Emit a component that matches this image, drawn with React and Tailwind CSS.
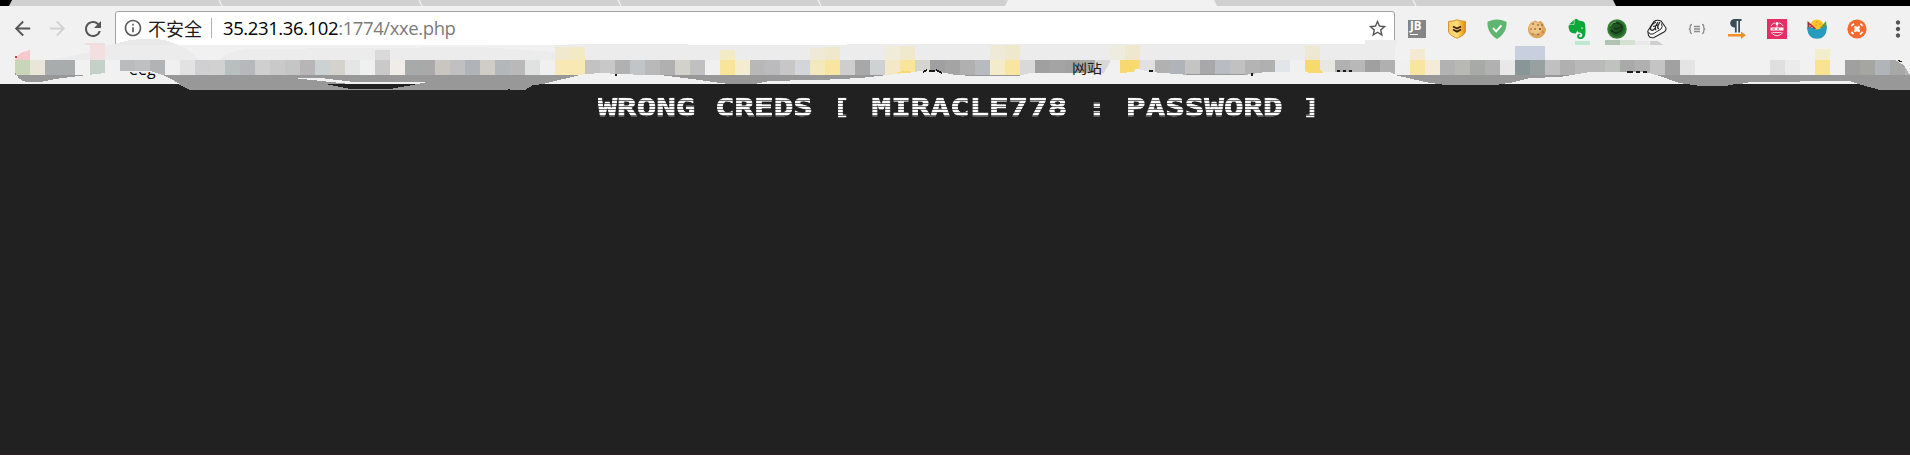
import React from "react";
import { MdArrowBack, MdArrowForward, MdRefresh, MdInfoOutline, MdStarBorder, MdMoreVert } from "react-icons/md";
import { SiEvernote } from "react-icons/si";

// Colours of the 15px cells in the bookmark strip, left to right.
const CELLS = (
  "f1f1f1 c9d5b9 e9e5d9 a9acac a9acac f1f1f1 c3d1c8 f1f1f1 b9bbbd c0c0c0 b1b3b5 f0f0f0 e2e2e2 d0d0d3 d1d1d1 b8bfbf " +
  "b7b8bb cfcfcf c9c9c9 c5c5c5 b8b5b6 ccd1d4 d5d1cd e4e6e6 f0f0f0 c9c9c9 f0ece8 a7aaa8 a9a9a9 c9c6c2 c0c0c0 b0b4b8 " +
  "d0cdc6 b3b7b9 b9b9b9 e0e2e2 f0f0f0 f7e8b4 f7e8b4 c2c2c2 c8c8c8 b1b1b1 c1c5c8 b9b9b9 b0b0b0 d2d1ca c0c0c0 f0f0f0 " +
  "f8e49a f3ecd1 b8b8b8 bbbbbd c7c7c7 d4d5da f4e9bd f8e5a0 cecece a8a8a8 cfd2d3 f3e8c7 f8e49a d5d5d0 a0a0a0 a4a4a4 " +
  "b0b0b0 b7bbc0 f3ebc9 f8e5a0 d9d9d9 a0a0a0 a4a4a4 a1a1a1 a9a9a9 d8d8d8 f0f0f0 f6dc7d e1e1e1 b1b1b1 b0b3b8 c4c4c4 " +
  "a8a8ab b9bdc3 c1c1c1 b4b4b4 b0b0b0 e2e5e9 f0f0f0 f8df8b e8e8e3 b1b1b1 b8b8b8 a0a0a0 b0b0b0 f0f0f0 f8e5a0 f4ecd8 " +
  "b2b2b2 b8b8b5 a8aaa8 b1b1b1 e8e8e8 899697 98a1a0 c0c0c0 b0b0b0 b9b9b9 b9b9b9 bfc2bf a9a9a9 b0b0b0 c4c4c4 a1a1a1 " +
  "e4e4e4 f1f1f1 f1f1f1 f1f1f1 f1f1f1 f1f1f1 dfdfdf ebebeb f1f1f1 f7e390 f1f1f1 a0a0a0 a5a5a2 b1b4b8 a7a7a7 b4b4b4"
).split(" ");

// [x, y, width, height, colour] of the paler patches above the cells.
const PATCHES = [
  [85, 43, 20, 2, "#efdcdc"], [90, 45, 15, 15, "#f3dfe0"], [375, 50, 15, 10, "#d9d9d9"],
  [555, 47, 15, 13, "#f0e9d0"], [570, 47, 15, 13, "#f3e9c5"],
  [720, 50, 15, 10, "#f3ebc4"], [810, 48, 15, 12, "#efead8"], [825, 47, 15, 13, "#f0e8ca"],
  [885, 46, 15, 14, "#f1ebda"], [900, 46, 15, 14, "#f1e9cd"],
  [990, 45, 15, 15, "#efead8"], [1005, 45, 15, 15, "#f0e8ca"], [1110, 45, 15, 15, "#eeebdf"], [1125, 45, 15, 15, "#efe8cf"],
  [1305, 46, 15, 14, "#efe8d0"], [1410, 49, 15, 11, "#f3ead0"],
  [1515, 46, 30, 14, "#c8cfdf"], [1815, 49, 15, 11, "#f4edcc"],
  [1365, 40, 32, 5, "#ececec"],
  [1575, 41, 15, 4, "#bde7cf"], [1605, 40, 15, 5, "#b0c4b1"], [1620, 40, 15, 5, "#d4e0d1"], [1635, 41, 14, 4, "#e9e9e9"],
];

function Tabs() {
  return (
    <div className="h-[6px] w-full bg-black">
      <svg className="block h-[6px] w-[1910px]" viewBox="0 0 1910 6">
        <path d="M9 6 12 0H1613L1616 6Z" fill="#d0d0d0" />
        <path d="M1005 6 1008 0H1214L1217 6Z" fill="#f1f1f1" />
        <path d="M219 0 222 6M419 0 422 6M618 0 621 6M818 0 821 6M1413 0 1416 6" stroke="#ededed" strokeWidth="1.5" />
      </svg>
    </div>
  );
}

function Shell({ children }) {
  return <div className="flex h-6 w-10 items-center justify-center">{children}</div>;
}

const ico = "block h-5 w-5";

function Extensions() {
  return (
    <div className="flex items-center">
      <Shell>
        <div className="flex h-[18px] w-[18px] flex-col bg-[#858585] pl-[2px] text-white">
          <span className="font-['Open_Sans',sans-serif] text-[11.5px] leading-[12px] font-bold">JB</span>
          <span className="mt-[2px] h-[1.5px] w-2 bg-white" />
        </div>
      </Shell>
      <Shell>
        <svg className={ico} viewBox="0 0 20 20">
          <defs><linearGradient id="gold"><stop stopColor="#f6c96a" /><stop offset=".5" stopColor="#ffe071" /><stop offset="1" stopColor="#e58a0e" /></linearGradient></defs>
          <path d="M1.5 2.5Q7 2 10 .8 13 2 18.500 2.500V12C18 16 14 17.500 10 19.300 6 17.500 2 16 1.500 12Z" fill="url(#gold)" stroke="#d48a28" strokeWidth=".9" />
          <path d="M6 7.500 10 9.500 14 7.500M6 10.500 10 12.700 14 10.500" fill="none" stroke="#3d220d" strokeWidth="1.900" />
        </svg>
      </Shell>
      <Shell>
        <svg className={ico} viewBox="0 0 20 20">
          <path d="M.5 2.800Q6 .5 10 .5T19.500 2.800C20 10 16.500 16.500 10 20 3.500 16.500 0 10 .5 2.800Z" fill="#5fb670" />
          <path d="m6 9.200 3.200 3.200 5.200-6" fill="none" stroke="#fff" strokeWidth="1.900" />
        </svg>
      </Shell>
      <Shell>
        <svg className={ico} viewBox="0 0 20 20">
          <path d="M8 1.500 11.500 3 13.500 1.700 16 4 17.500 7.500 19 10A9 9 0 1 1 4 3.500Z" fill="#dda560" />
          <ellipse cx="8.500" cy="9" rx="6.500" ry="6" fill="#efc384" />
          <g fill="#6c4021"><circle cx="6" cy="5" r=".8" /><circle cx="11" cy="6" r=".8" /><circle cx="15" cy="6" r=".7" /><circle cx="4" cy="10" r=".7" /><circle cx="8" cy="10" r=".8" /><circle cx="13" cy="10" r="1" /><circle cx="6" cy="15" r=".6" /><circle cx="11" cy="15.500" r=".7" /><circle cx="16" cy="13" r=".6" /></g>
        </svg>
      </Shell>
      <Shell><SiEvernote className="h-5 w-5 text-[#0aa839]" /></Shell>
      <Shell>
        <svg className={ico} viewBox="0 0 20 20">
          <defs><radialGradient id="orb"><stop stopColor="#1d4b20" /><stop offset=".65" stopColor="#225f26" /><stop offset="1" stopColor="#438b3c" /></radialGradient></defs>
          <circle cx="10" cy="10" r="9.800" fill="url(#orb)" />
          <path d="M6 5Q11 2 15 7 16 12 10 14 6 14 4 11M7 9Q10 11 14 8" stroke="#123a17" strokeWidth="1.500" fill="none" />
          <path d="M3 7Q5 3 9 3" stroke="#6ca55b" fill="none" />
        </svg>
      </Shell>
      <Shell>
        <svg className={ico} viewBox="0 0 20 20" fill="none" stroke="#262626">
          <path d="M7 2.500Q10 .2 14 2L18 7.500Q20.500 10.500 17 13L7 18.500Q3 19.500 1.500 16.500L.8 12Z" fill="#fafafa" strokeWidth="1.100" />
          <path d="M1.500 13Q2.500 16 6 15L14 10Q16 8 14.500 4.500" />
          <path d="M9 3Q3 6 3.500 10 4.500 13 8 9.500M6 7.500 11 6M11 3Q7 9 9 11M13 3Q9 9 12 10" strokeWidth="1.300" />
        </svg>
      </Shell>
      <Shell>
        <svg className={ico} viewBox="0 0 20 20" fill="none" stroke="#8c8c8c" strokeWidth="1.300">
          <path d="M5 5.500Q3.300 5.500 3.300 7V8.500Q3.300 10 1.800 10 3.300 10 3.300 11.500V13Q3.300 14.500 5 14.500M15 5.500Q16.700 5.500 16.700 7V8.500Q16.700 10 18.200 10 16.700 10 16.700 11.500V13Q16.700 14.500 15 14.500M7 7.500H13M7 10H13M7 12.500H13" />
        </svg>
      </Shell>
      <Shell>
        <svg className={ico} viewBox="0 0 20 20">
          <path d="M7 0H14.500V2H13V13.500H11.200V2H9.700V13.500H7.900V8.500A4.200 4.200 0 0 1 7 0Z" fill="#3b4c58" />
          <path d="M1 15H14V12.500L19 16.300 14 20V17.600H1Z" fill="#f7901e" />
        </svg>
      </Shell>
      <Shell>
        <svg className={ico} viewBox="0 0 20 20" fill="none" stroke="#fbd0de">
          <rect width="20" height="20" fill="#e62e66" stroke="none" />
          <path d="M4 7Q5.500 4 8 3.800M12 3.800Q15 4.500 16 7M4 13.500Q10 20 16 13.500M5.500 13.500H14.500M10 6V9" />
          <circle cx="10" cy="4.500" r="1.500" fill="#fff" stroke="none" />
          <rect x="3.500" y="8.500" width="13" height="3" fill="#fff" stroke="none" />
          <path d="M5.500 10H8M10 10H12" stroke="#e62e66" />
        </svg>
      </Shell>
      <Shell>
        <svg className={ico} viewBox="0 0 20 20">
          <circle cx="10" cy="7" r="6.600" fill="#fcc62b" />
          <path d="M.5 2 9 9.500 4 13 .5 10Z" fill="#a82c3a" />
          <path d="M19 2 13 9 18 12 19.700 8Z" fill="#5b9d48" />
          <path d="M.2 8Q5 8 9 10.500 13 10.500 19.800 6.500V10Q19 19.700 10 19.800 1 19.700.2 10Z" fill="#259bbd" />
          <g fill="#e58a22"><circle cx="10" cy="3" r=".8" /><circle cx="13" cy="5" r=".8" /><circle cx="9" cy="6" r=".8" /></g>
          <g fill="#fff"><circle cx="3" cy="7" r=".7" /><circle cx="5" cy="8.500" r=".6" /></g>
        </svg>
      </Shell>
      <Shell>
        <svg className={ico} viewBox="0 0 20 20">
          <circle cx="10" cy="10" r="9.600" fill="#f66b2b" />
          <path d="M7 7.500 9 7 10 8 12 6.800 13 8 12.200 10 13.200 12 12 13.200 10 12.300 8 13.200 6.800 12 7.800 10Z" fill="#fff" />
          <path d="M4.200 7.200 7 4.700M13.400 4.700 15.600 6.800M4.300 12.900 6.500 15.200M13 15.500 15.600 12.900" stroke="#fff" strokeWidth="1.700" />
        </svg>
      </Shell>
    </div>
  );
}

function Toolbar() {
  return (
    <div className="flex h-10 items-start bg-[#f1f1f1] pt-[5px]">
      <div className="flex h-[35px] w-[115px] shrink-0 items-center pl-[11px]">
        <MdArrowBack className="h-[23px] w-[23px] text-[#555]" />
        <MdArrowForward className="ml-3 h-[23px] w-[23px] text-[#d2d2d2]" />
        <MdRefresh className="ml-3 h-6 w-6 text-[#555]" />
      </div>
      <div className="flex h-[35px] w-[1280px] shrink-0 items-center rounded-[3px] border border-[#a3a3a3] bg-white pl-[7px] pr-[6px] pb-px">
        <MdInfoOutline className="h-5 w-5 text-[#5a5a5a]" />
        <span className="ml-[5px] w-[54px] font-['Noto_Sans_CJK_SC',sans-serif] text-[18px] leading-6 font-normal text-[#1c1c1c]">不安全</span>
        <span className="ml-[9px] h-5 w-px bg-[#b0b0b0]" />
        <span className="ml-[11px] font-['Open_Sans','Noto_Sans',sans-serif] text-[18.5px] leading-6 tracking-[-0.4px] text-black">
          35.231.36.102<span className="text-[#7b7b7b]">:1774/xxe.php</span>
        </span>
        <MdStarBorder className="ml-auto h-[21px] w-[21px] text-[#555]" />
      </div>
      <div className="flex h-[35px] items-center pl-[2px]">
        <Extensions />
        <MdMoreVert className="ml-[8px] h-[26px] w-[26px] shrink-0 text-[#555]" />
      </div>
    </div>
  );
}

function Bookmarks() {
  return (
    <div className="relative -mt-[7px] h-[52px]">
      <svg className="block h-[52px] w-[1910px]" viewBox="0 39 1910 52" shapeRendering="crispEdges">
        <rect y="46" width="1910" height="38" fill="#f1f1f1" />
        <path d="M0 84H1910V91H0Z" fill="#212121" />
        <path d="M110 45 130 40Q150 38 165 40L178 45Z" fill="#e9e9e9" />
        <path d="M105 45H1395V60H50L90 52Z" fill="#ececec" />
        <path d="M178 45Q190 49 200 60H220Q225 51 250 49L480 47 555 52V45Z" fill="#f1f1f1" />
        <path d="M569 45H688M847 45H1365" stroke="#ececec" strokeWidth="2" />
        {PATCHES.map(([x, y, w, h, c]) => <rect key={`${x}-${y}`} x={x} y={y} width={w} height={h} fill={c} />)}
        <path d="M1650 41 1657 41 1664 45H1650Z" fill="#cfcfcf" />
        <path d="M15 60Q16 53 30 50V60Z" fill="#f5c9cd" />
        <circle cx="16" cy="57" r="1.500" fill="#b74747" />
        {CELLS.map((c, i) => <rect key={i} x={i * 15} y="60" width="15" height="15" fill={`#${c}`} />)}
        <g fill="#989898">
          <path d="M15 72 15 75H87L55 79 40 82H26Q18 80 15 72Z" />
          <path d="M160 75H582L569 80 545 84 533 85 525 90H190L180 85Z" />
          <path d="M660 75H890L860 79 810 80 770 81 755 84H727L700 80Z" />
          <path d="M950 75H1025L1020 76H950ZM1185 74H1245V76H1190Z" />
          <path d="M1395 75H1910V90H1880L1855 83H1750L1735 84 1725 86H1700L1680 83 1660 79H1550L1500 84 1497 85H1445L1425 82Z" />
        </g>
        <g fill="#f1f1f1">
          <path d="M87 75 125 71 150 71 165 76 180 83.900H40Z" />
          <path d="M15 76 20 81 30 84H15Z" />
          <path d="M293 78 325 78.500 350 81.500 427 82 418 84H350Z" />
          <path d="M545 83.500 582 74.500 600 73 620 74 660 75.500 725 83.500Z" />
          <path d="M760 83.500 780 81 820 80 860 78 905 73 930 70 955 75 975 76 1018 76V83.500Z" />
          <path d="M1018 76 1030 73 1060 72.500 1104 73 1110 62 1150 72 1190 75H1245L1265 72H1390L1400 77 1425 83.500H1018Z" />
          <path d="M1510 83 1530 78 1560 77 1590 72H1645L1660 76 1680 83.500Z" />
          <path d="M1748 82H1800V81H1850L1856 83.500H1748Z" />
          <path d="M1895 60H1910V75L1904 65Z" />
          <path d="M0 60H15V84H0Z" />
        </g>
        <path d="M325 84H418L390 89H350Z" fill="#212121" />
        <path d="M508 90 510 89M1899 61.500H1902M1898 60.500H1900" stroke="#151515" />
        <path d="M1120 60H1134L1140 62 1134 72 1120 73ZM1305 60H1320V70L1324 73H1308L1305 70ZM895 73 903 71H911V73Z" fill="#f8d970" />
        <path d="M616 74V76M1252 73V76M1149 71H1153M1337 71H1340M1343 71H1346M1349 71H1352M1627 72H1633M1636 72H1640M1643 72H1647M923 72 927 70M929 71H935M936 70 942 73" stroke="#1b1b1b" strokeWidth="1.400" />
      </svg>
      <span className="absolute left-[129px] top-[20px] font-['Open_Sans',sans-serif] text-[16px] leading-5 text-black [clip-path:inset(65%_0_0_0)]">eeg</span>
      <span className="absolute left-[1072px] top-[20px] whitespace-nowrap font-['Noto_Sans_CJK_SC',sans-serif] text-[15px] leading-4 text-[#202020] [clip-path:inset(22%_0_0_0)]">网站</span>
    </div>
  );
}

// Square brackets stay within the cap height of the surrounding capitals.
function Bracket({ children }) {
  return <span className="align-[2px] text-[22px] leading-[18px] tracking-[1.45px]">{children}</span>;
}

export default function App() {
  return (
    <div className="flex h-[455px] w-[1910px] flex-col overflow-hidden bg-[#212121]">
      <Tabs />
      <Toolbar />
      <Bookmarks />
      <main className="flex flex-1 justify-center border-b border-[#302024] pt-[1px] pl-[9px]">
        <h1 className="h-8 origin-top scale-x-[1.333] whitespace-pre bg-[repeating-linear-gradient(to_bottom,#fff_0px,#fff_2px,#707070_2px,#707070_3px)] bg-clip-text font-['DejaVu_Sans_Mono',monospace] text-[24.4px] leading-8 font-bold text-transparent [-webkit-text-stroke:0.7px_transparent]">WRONG CREDS <Bracket>[</Bracket> MIRACLE778 : PASSWORD <Bracket>]</Bracket></h1>
      </main>
    </div>
  );
}
